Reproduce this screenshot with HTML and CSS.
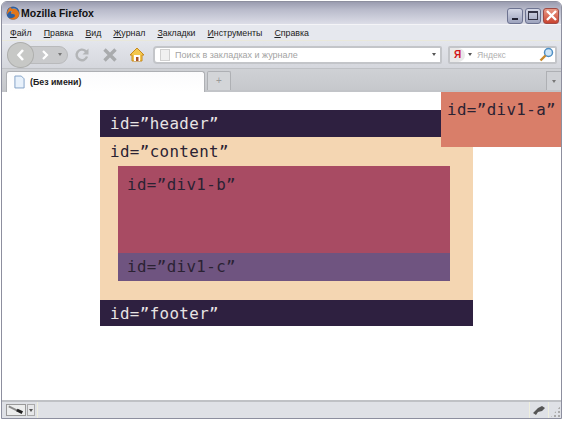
FILE: index.html
```html
<!DOCTYPE html>
<html lang="ru">
<head>
  <meta charset="UTF-8">
  <title>Mozilla Firefox</title>
  <link rel="stylesheet" href="styles.css">
</head>
<body>
  <div class="window">
    <div class="titlebar">
      <svg class="fox" width="14" height="14" viewBox="0 0 16 16">
        <circle cx="8" cy="8" r="7.500" fill="#2f5f9f"/>
        <circle cx="9" cy="6" r="3.500" fill="#6f9fd0"/>
        <path d="M1 10C1 5 3 2 6 1C5 3 7 3 9 3C12 3 15 6 15 9C15 13 12 15.500 8 15.500C6 15.500 4 15 3 13.500C5 14.500 8 14 10 12C11 10 9 8.500 6.500 9C5 8 6 6.500 7 6C5 5 3 7 1 10Z" fill="#e2761b"/>
      </svg>
      <span class="title">Mozilla Firefox</span>
      <div class="winbtns">
        <span class="winbtn"><i class="min"></i></span>
        <span class="winbtn"><i class="max"></i></span>
        <span class="winbtn close">
          <svg width="13" height="13" viewBox="0 0 13 13"><path d="M2 2L11 11M11 2L2 11" stroke="#fff" stroke-width="2.400"/></svg>
        </span>
      </div>
    </div>

    <div class="menubar">
      <span><u>Ф</u>айл</span>
      <span><u>П</u>равка</span>
      <span><u>В</u>ид</span>
      <span><u>Ж</u>урнал</span>
      <span><u>З</u>акладки</span>
      <span><u>И</u>нструменты</span>
      <span><u>С</u>правка</span>
    </div>

    <div class="toolbar">
      <div class="navgroup">
        <span class="back">
          <svg width="12" height="14" viewBox="0 0 12 14"><path d="M8 2L3.500 7L8 12" fill="none" stroke="#fff" stroke-width="2.600"/></svg>
        </span>
        <span class="fwd">
          <svg width="10" height="12" viewBox="0 0 10 12"><path d="M3 2L7 6L3 10" fill="none" stroke="#fff" stroke-width="2.200"/></svg>
        </span>
        <span class="drop"></span>
      </div>
      <svg class="reload" width="16" height="16" viewBox="0 0 16 16"><path d="M13 9.500A5.300 5.300 0 1 1 11.500 4L13.500 5.500" fill="none" stroke="#b3b5b7" stroke-width="2.400"/><path d="M14.500 1.500V7.500H8.500Z" fill="#b3b5b7"/></svg>
      <svg class="stop" width="16" height="16" viewBox="0 0 16 16"><path d="M2.500 2.500L13.500 13.500M13.500 2.500L2.500 13.500" stroke="#a9abad" stroke-width="3.400"/></svg>
      <svg class="home" width="16" height="15" viewBox="0 0 16 15"><path d="M8 1L1 8H3V14H13V8H15Z" fill="#f3c74e" stroke="#c98a1c" stroke-width="1"/><rect x="5" y="8" width="6" height="6" fill="#fff"/><rect x="7" y="10" width="2.500" height="4" fill="#a8552a"/></svg>
      <div class="urlbar">
        <span class="page-ico"></span>
        <span class="url-text">Поиск в закладках и журнале</span>
        <span class="drop dark"></span>
      </div>
      <div class="searchbar">
        <span class="engine"><b>Я</b></span>
        <span class="drop dark"></span>
        <span class="search-text">Яндекс</span>
        <svg class="lens" width="15" height="15" viewBox="0 0 15 15"><circle cx="9.500" cy="5.500" r="4" fill="#cfe6f7" stroke="#4f8fc4" stroke-width="1.500"/><path d="M6.500 8.500L1.500 13.500" stroke="#c98a2c" stroke-width="2.400"/></svg>
      </div>
    </div>

    <div class="tabbar">
      <div class="tab">
        <svg width="11" height="14" viewBox="0 0 12 14"><path d="M1 .5H8L11 3.500V13.500H1Z" fill="#e8f1fb" stroke="#7d9cc4"/></svg>
        <span>(Без имени)</span>
      </div>
      <div class="newtab">+</div>
      <div class="tabmenu"><span class="drop"></span></div>
    </div>

    <div class="viewport">
      <div class="page">
        <div class="block dark">id=”header”</div>
        <div class="content">
          <div class="content-label">id=”content”</div>
          <div class="div1-b">id=”div1-b”</div>
          <div class="div1-c">id=”div1-c”</div>
        </div>
        <div class="block dark">id=”footer”</div>
      </div>
      <div class="div1-a">id=”div1-a”</div>
    </div>

    <div class="statusbar">
      <div class="stat-left">
        <span class="stat-tool">
          <svg width="20" height="10" viewBox="0 0 20 10"><path d="M2 1L12 6" stroke="#8a8a8a" stroke-width="2"/><path d="M11 5L17 8" stroke="#222" stroke-width="3.400"/></svg>
        </span>
        <span class="stat-drop"><span class="drop dark"></span></span>
      </div>
      <div class="stat-right">
        <svg width="14" height="10" viewBox="0 0 14 10"><path d="M1 8L6 3L10 1L13 3L10 6L6 7L4 10Z" fill="#555"/></svg>
      </div>
      <div class="grip"></div>
    </div>
  </div>
</body>
</html>
```

FILE: styles.css
```css
html, body { margin: 0; padding: 0; }
body { width: 565px; height: 421px; background: #fff; overflow: hidden; font-family: "Liberation Sans", Arial, sans-serif; }

.window { box-sizing: border-box; width: 561px; height: 418px; margin: 1px 0 0 1px; border: 1px solid #8d8f9f; border-radius: 6px 6px 0 0; display: flex; flex-direction: column; overflow: hidden; background: #dfe2e8; }

/* title bar */
.titlebar { height: 22px; flex: none; display: flex; align-items: center; padding: 0 2px 0 4px; background: linear-gradient(#9a9cb0, #b9bbcb 35%, #dcdde7); }
.fox { flex: none; }
.title { margin-left: 1px; font-size: 10.500px; font-weight: bold; color: #111; }
.winbtns { margin-left: auto; display: flex; gap: 2px; margin-top: 5px; }
.winbtn { box-sizing: border-box; width: 16px; height: 16px; border: 1px solid #6d7391; border-radius: 3px; background: linear-gradient(#d5d8e6, #9da3bd); display: flex; align-items: center; justify-content: center; }
.winbtn.close { background: linear-gradient(#ea9a86, #c9432f); border-color: #a04a45; }
.min { width: 6px; height: 2px; margin-top: 7px; background: #223; }
.max { box-sizing: border-box; width: 10px; height: 9px; border: 1px solid #334; border-top-width: 2px; }

/* menu */
.menubar { height: 17px; flex: none; display: flex; align-items: center; gap: 12px; padding-left: 8px; font-size: 8.800px; color: #222; background: #e6e8ee; border-top: 1px solid #f4f4f7; border-bottom: 1px solid #e9e8da; box-sizing: border-box; }

/* toolbar */
.toolbar { height: 27px; flex: none; display: flex; align-items: center; padding: 0 4px 0 6px; background: linear-gradient(#e4e6ec, #d5d7dd); }
.toolbar > * { flex: none; }
.navgroup { box-sizing: border-box; width: 60px; display: flex; align-items: center; height: 18px; background: #c9cacc; border: 1px solid #b9babc; border-radius: 9px; }
.back { box-sizing: border-box; width: 27px; height: 26px; flex: none; margin: -4px 0 -4px -2px; border-radius: 50%; background: #c7c8c6; border: 1px solid #aeafad; display: flex; align-items: center; justify-content: center; }
.fwd { width: 21px; flex: none; display: flex; justify-content: center; }
.navgroup .drop { margin-left: 3px; }
.drop { display: inline-block; width: 0; height: 0; border: 2.500px solid transparent; border-top: 3px solid #777; border-bottom: 0; }
.drop.dark { border-top-color: #555; }
.reload { margin-left: 6px; }
.stop { margin-left: 12px; }
.home { margin-left: 11px; }
.urlbar { box-sizing: border-box; width: 289px; height: 18px; margin-left: 8px; display: flex; align-items: center; background: #fff; border: 2px solid #c3c5c9; border-radius: 4px 2px 2px 4px; padding-right: 4px; }
.page-ico { box-sizing: border-box; width: 10px; height: 12px; margin: 0 5px 0 5px; background: #f0f0f0; border: 1px solid #d0d0d0; }
.url-text { font-size: 9px; color: #a3a3a3; white-space: nowrap; }
.urlbar .drop { margin-left: auto; }
.searchbar { box-sizing: border-box; width: 109px; height: 18px; margin-left: 6px; display: flex; align-items: center; background: #fff; border: 2px solid #c3c5c9; border-radius: 2px; }
.engine { width: 15px; height: 14px; background: #e9e9e9; border-radius: 0 7px 7px 0; display: flex; align-items: center; justify-content: center; font-size: 10px; color: #d2161b; }
.searchbar .drop { margin: 0 5px 0 3px; }
.search-text { font-size: 8.600px; color: #b0b0b0; }
.lens { margin-left: auto; margin-right: 1px; }

/* tabs */
.tabbar { box-sizing: border-box; height: 24px; flex: none; display: flex; align-items: flex-end; padding-left: 4px; background: linear-gradient(#cfd1d5, #c6c8cc); border-top: 1px solid #bfc1c5; border-bottom: 2px solid #c2c4c8; }
.tab { box-sizing: border-box; width: 199px; height: 21px; margin-bottom: -2px; display: flex; align-items: center; gap: 5px; padding-left: 7px; background: linear-gradient(#fbfbfc, #fff); border: 1px solid #aeb0b4; border-bottom: 0; border-radius: 3px 3px 0 0; font-size: 8.800px; font-weight: bold; color: #222; }
.newtab { box-sizing: border-box; width: 24px; height: 19px; margin-left: 2px; text-align: center; font-size: 10px; line-height: 17px; color: #999; background: #d3d5d8; border: 1px solid #aeb0b4; border-bottom: 0; border-radius: 2px 2px 0 0; }
.tabmenu { box-sizing: border-box; width: 15px; height: 19px; margin-left: auto; display: flex; align-items: center; justify-content: center; background: #cfd1d5; border: 1px solid #aeb0b4; border-right: 0; border-bottom: 0; }

/* page */
.viewport { position: relative; flex: 1; background: #fff; padding: 18px 0 0 98px; }
.page { width: 373px; font-family: "DejaVu Sans Mono", monospace; font-size: 15.800px; letter-spacing: .4px; color: #2b2233; }
.block { box-sizing: border-box; height: 27px; padding-left: 10px; line-height: 27px; }
.block.dark { background: #2e2040; color: #e8e4e4; }
.block.dark:last-child { height: 26px; line-height: 28px; }
.content { box-sizing: border-box; height: 163px; padding: 0 23px 0 18px; background: #f4d6b2; }
.content-label { height: 29px; margin-left: -8px; line-height: 30px; }
.div1-b { box-sizing: border-box; height: 87px; padding: 5px 0 0 9px; line-height: 27px; background: #a84b63; }
.div1-c { box-sizing: border-box; height: 28px; padding-left: 9px; line-height: 28px; background: #6f5480; }
.div1-a { position: absolute; top: 0; right: 0; box-sizing: border-box; width: 120px; height: 55px; padding: 5px 0 0 6px; line-height: 26px; background: #d97e69; font-family: "DejaVu Sans Mono", monospace; font-size: 15.800px; letter-spacing: .4px; color: #2b2233; white-space: nowrap; }

/* status bar */
.statusbar { box-sizing: border-box; height: 18px; flex: none; display: flex; align-items: center; padding-left: 4px; background: #dfe1e6; border-top: 2px solid #bfc1c5; }
.stat-left { display: flex; align-items: center; gap: 1px; border-right: 1px solid #eeeedd; padding-right: 2px; height: 100%; }
.stat-tool { box-sizing: border-box; width: 20px; height: 12px; display: flex; align-items: center; justify-content: center; background: #eceded; border: 1px solid #999; }
.stat-drop { box-sizing: border-box; width: 8px; height: 12px; display: flex; align-items: center; justify-content: center; background: #e6e7e9; border: 1px solid #aaa; }
.stat-right { box-sizing: border-box; margin-left: auto; width: 20px; height: 100%; display: flex; align-items: center; justify-content: center; border-left: 1px solid #eeeedd; border-right: 1px solid #eeeedd; }
.grip { width: 12px; height: 100%; background: radial-gradient(circle, #aaa 1px, transparent 1.300px) 0 0 / 4px 4px; clip-path: polygon(100% 20%, 100% 100%, 10% 100%); }
```
